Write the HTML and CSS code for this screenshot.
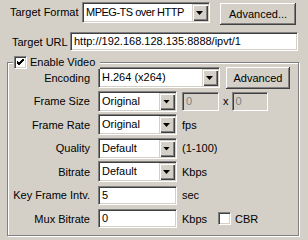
FILE: index.html
```html
<!DOCTYPE html>
<html lang="en">
<head>
    <meta charset="UTF-8">
    <title>Video Output Settings</title>
    <link rel="stylesheet" href="styles.css">
</head>
<body>
    <div class="panel">
        <div class="row row-format">
            <label class="lbl-format">Target Format</label>
            <div class="combo w-format"><span class="val">MPEG-TS over HTTP</span><span class="drop"></span></div>
            <button class="btn btn-adv">Advanced...</button>
        </div>
        <div class="row row-url">
            <label class="lbl-url">Target URL</label>
            <div class="field w-url">http://192.168.128.135:8888/ipvt/1</div>
        </div>

        <!-- Enable Video group -->
        <div class="group">
            <div class="group-title">
                <span class="check">
                    <svg width="7" height="7" viewBox="0 0 7 7"><path d="M0 2 L2 4 L7 -1 M0 3 L2 5 L7 0 M0 4 L2 6 L7 1" stroke="#000" stroke-width="1" fill="none" shape-rendering="crispEdges"/></svg>
                </span>
                Enable Video
            </div>
            <div class="rows">
                <div class="row">
                    <label class="lbl">Encoding</label>
                    <div class="combo w-enc"><span class="val">H.264 (x264)</span><span class="drop"></span></div>
                    <button class="btn btn-enc">Advanced</button>
                </div>
                <div class="row">
                    <label class="lbl">Frame Size</label>
                    <div class="combo w-std"><span class="val">Original</span><span class="drop"></span></div>
                    <div class="field disabled w-size">0</div>
                    <span class="times">x</span>
                    <div class="field disabled w-size2">0</div>
                </div>
                <div class="row">
                    <label class="lbl">Frame Rate</label>
                    <div class="combo w-std"><span class="val">Original</span><span class="drop"></span></div>
                    <span class="unit">fps</span>
                </div>
                <div class="row">
                    <label class="lbl">Quality</label>
                    <div class="combo w-std"><span class="val">Default</span><span class="drop"></span></div>
                    <span class="unit">(1-100)</span>
                </div>
                <div class="row">
                    <label class="lbl">Bitrate</label>
                    <div class="combo w-std"><span class="val">Default</span><span class="drop"></span></div>
                    <span class="unit">Kbps</span>
                </div>
                <div class="row">
                    <label class="lbl">Key Frame Intv.</label>
                    <div class="field w-std">5</div>
                    <span class="unit">sec</span>
                </div>
                <div class="row">
                    <label class="lbl">Mux Bitrate</label>
                    <div class="field w-std">0</div>
                    <span class="unit">Kbps</span>
                    <span class="check cbr"></span>
                    <span class="cbr-text">CBR</span>
                </div>
            </div>
        </div>
    </div>
</body>
</html>
```

FILE: styles.css
```css
* {
    margin: 0;
    padding: 0;
    box-sizing: border-box;
}

body {
    font-family: 'Liberation Sans', Arial, sans-serif;
    font-size: 11px;
    color: #000;
    background-color: #d4d0c8;
}

.panel {
    width: 308px;
    height: 240px;
    padding-top: 2px;
}

.row {
    display: flex;
    align-items: center;
    height: 21px;
}

/* top rows */
.row-format {
    padding-left: 10px;
    height: 23px;
    align-items: flex-start;
}

.lbl-format {
    width: 72px;
    line-height: 21px;
}

.w-format {
    width: 128px;
}

.w-format .val {
    letter-spacing: -0.5px;
}

.btn-adv {
    width: 76px;
    height: 22px;
    margin-left: 10px;
    margin-top: 1px;
}

.row-url {
    margin-top: 7px;
    padding-left: 12px;
    height: 19px;
}

.lbl-url {
    width: 58px;
}

.w-url {
    width: 228px;
}

/* classic controls */
.combo {
    display: flex;
    height: 21px;
    background-color: #fff;
    border: 1px solid;
    border-color: #808080 #fff #fff #808080;
    box-shadow: inset 1px 1px #404040, inset -1px -1px #d4d0c8;
}

.combo .val {
    flex: 1;
    padding-left: 3px;
    line-height: 19px;
    white-space: nowrap;
    overflow: hidden;
}

.combo .drop {
    position: relative;
    width: 16px;
    margin: 1px;
    background-color: #d4d0c8;
    box-shadow: inset 1px 1px #d4d0c8, inset 2px 2px #fff, inset -1px -1px #404040, inset -2px -2px #808080;
}

.combo .drop::after {
    content: "";
    position: absolute;
    left: 4px;
    top: 7px;
    width: 7px;
    height: 4px;
    background-color: #000;
    clip-path: polygon(0 0, 100% 0, 50% 100%);
}

.field {
    height: 19px;
    padding-left: 3px;
    line-height: 17px;
    background-color: #fff;
    border: 1px solid;
    border-color: #808080 #fff #fff #808080;
    box-shadow: inset 1px 1px #404040, inset -1px -1px #d4d0c8;
    white-space: nowrap;
    overflow: hidden;
}

.field.disabled {
    background-color: #d4d0c8;
    color: #808080;
}

.btn {
    font-family: 'Liberation Sans', Arial, sans-serif;
    font-size: 11px;
    color: #000;
    background-color: #d4d0c8;
    border: none;
    box-shadow: inset -1px -1px #404040, inset 1px 1px #fff, inset -2px -2px #808080, inset 2px 2px #d4d0c8;
}

.check {
    display: inline-flex;
    align-items: center;
    justify-content: center;
    width: 13px;
    height: 13px;
    background-color: #fff;
    border: 1px solid;
    border-color: #808080 #fff #fff #808080;
    box-shadow: inset 1px 1px #404040, inset -1px -1px #d4d0c8;
}

/* group box */
.group {
    position: relative;
    width: 292px;
    height: 174px;
    margin: 11px 0 0 7px;
    padding-top: 4px;
    border: 1px solid #808080;
    box-shadow: inset 1px 1px #fff, 1px 1px #fff;
}

.group-title {
    position: absolute;
    top: -8px;
    left: 5px;
    display: flex;
    align-items: center;
    gap: 3px;
    padding: 0 5px 0 1px;
    background-color: #d4d0c8;
    line-height: 14px;
}

.rows {
    display: flex;
    flex-direction: column;
    gap: 2.5px;
}

.lbl {
    width: 82px;
    margin-right: 8px;
    text-align: right;
    white-space: nowrap;
}

.w-enc {
    width: 122px;
}

.btn-enc {
    width: 64px;
    height: 22px;
    margin-left: 6px;
}

.w-std {
    width: 79px;
}

.w-size {
    width: 37px;
    margin-left: 5px;
}

.times {
    margin: 0 3px 0 4px;
}

.w-size2 {
    width: 36px;
}

.unit {
    margin-left: 5px;
}

.cbr {
    margin-left: 11px;
}

.cbr-text {
    margin-left: 4px;
}
```
